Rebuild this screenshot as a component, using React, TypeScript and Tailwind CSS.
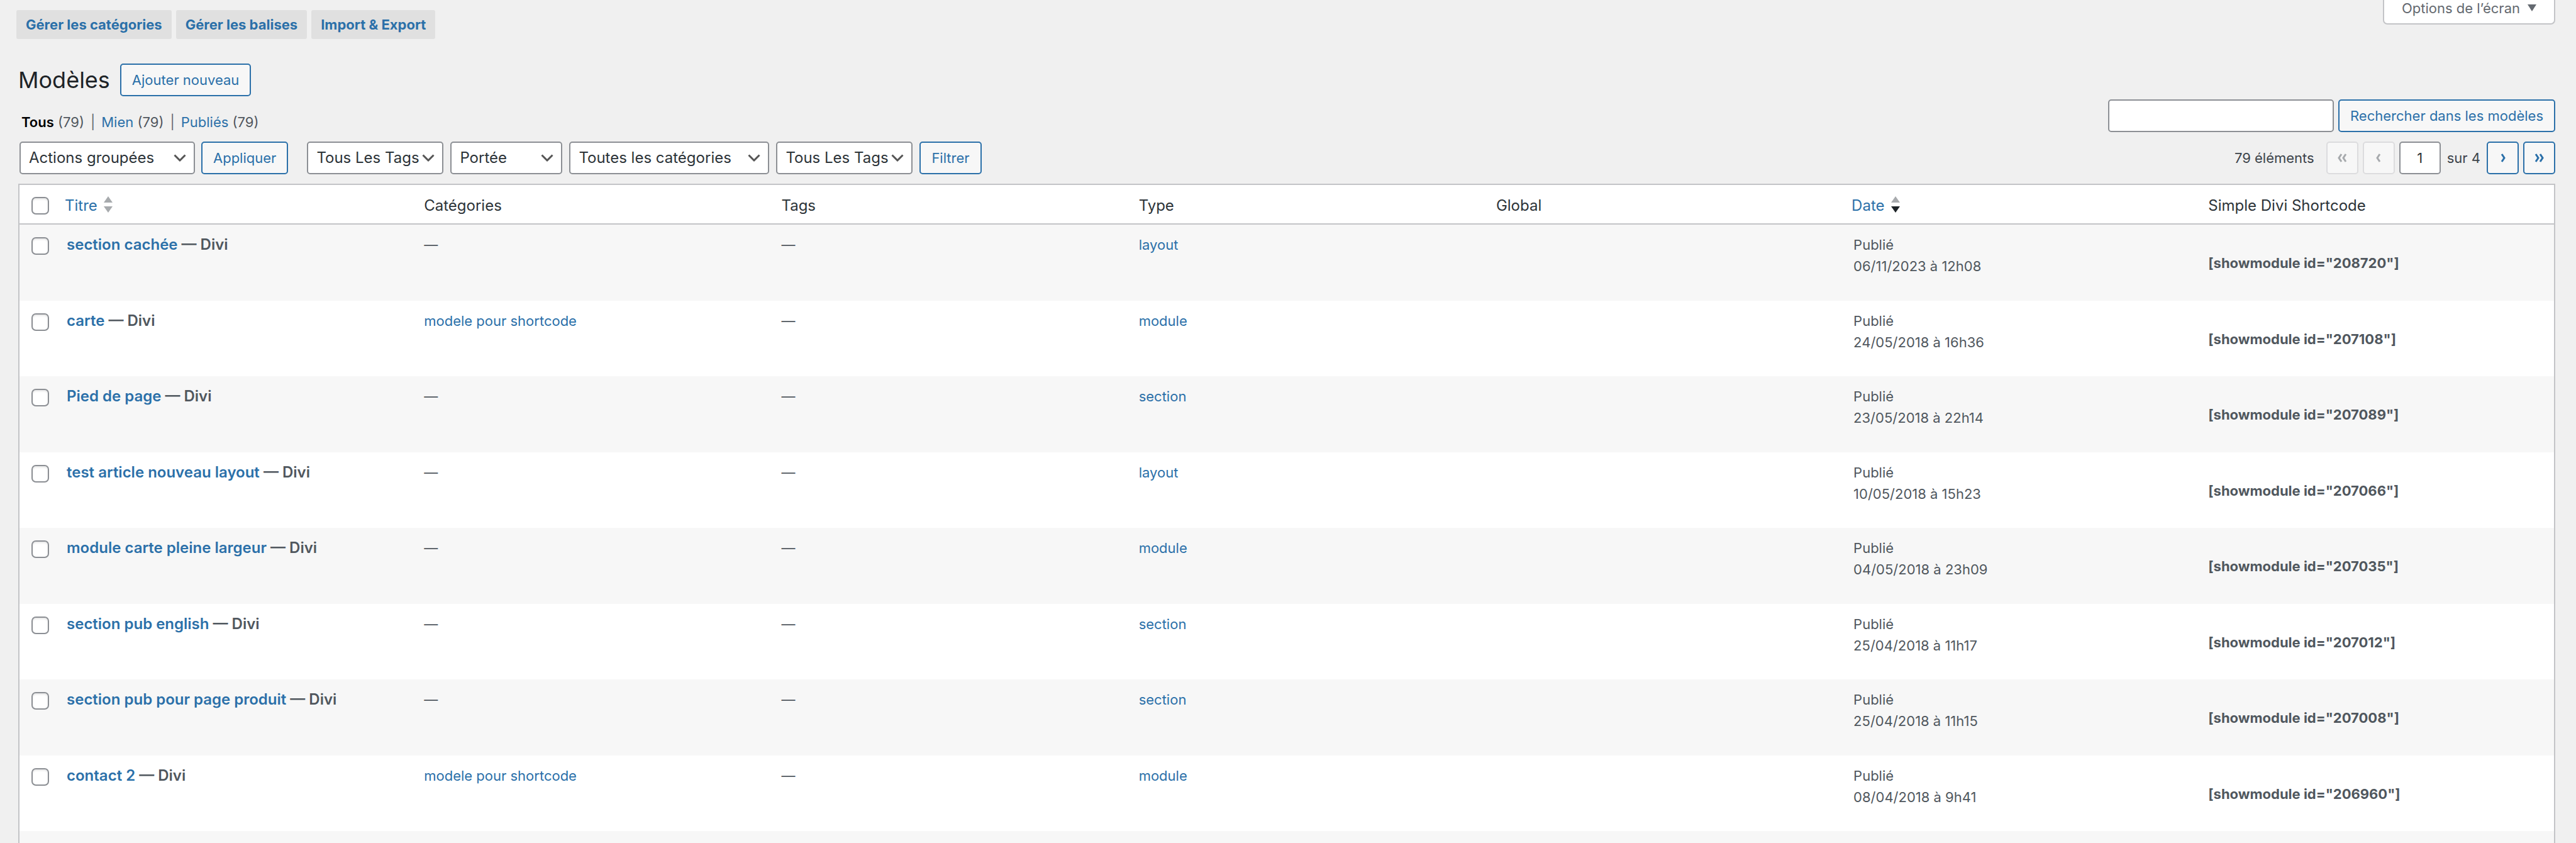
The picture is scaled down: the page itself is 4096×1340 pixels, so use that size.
import { ReactNode } from 'react'
import { clsx } from 'clsx'

const topLinks = ['Gérer les catégories', 'Gérer les balises', 'Import & Export']

const views = [
  { label: 'Tous', count: 79, current: true },
  { label: 'Mien', count: 79, current: false },
  { label: 'Publiés', count: 79, current: false },
]

const filters = [
  { id: 'filter-tags', label: 'Filtrer par tag', value: 'Tous Les Tags', width: 'w-[217px]' },
  { id: 'filter-scope', label: 'Filtrer par portée', value: 'Portée', width: 'w-[178px]' },
  { id: 'filter-cat', label: 'Filtrer par catégorie', value: 'Toutes les catégories', width: 'w-[318px]' },
  { id: 'filter-pack', label: 'Filtrer par pack', value: 'Tous Les Tags', width: 'w-[217px]' },
]

const templates = [
  { id: 208720, title: 'section cachée', category: '', type: 'layout', date: '06/11/2023 à 12h08' },
  { id: 207108, title: 'carte', category: 'modele pour shortcode', type: 'module', date: '24/05/2018 à 16h36' },
  { id: 207089, title: 'Pied de page', category: '', type: 'section', date: '23/05/2018 à 22h14' },
  { id: 207066, title: 'test article nouveau layout', category: '', type: 'layout', date: '10/05/2018 à 15h23' },
  { id: 207035, title: 'module carte pleine largeur', category: '', type: 'module', date: '04/05/2018 à 23h09' },
  { id: 207012, title: 'section pub english', category: '', type: 'section', date: '25/04/2018 à 11h17' },
  { id: 207008, title: 'section pub pour page produit', category: '', type: 'section', date: '25/04/2018 à 11h15' },
  { id: 206960, title: 'contact 2', category: 'modele pour shortcode', type: 'module', date: '08/04/2018 à 9h41' },
]

function Button({ children }: { children: ReactNode }) {
  return (
    <button
      type="button"
      className="h-[52px] rounded-[5px] border-2 border-[#2b70a9] bg-[#f7f7f7] px-[17px] whitespace-nowrap text-[#2b70a9]"
    >
      {children}
    </button>
  )
}

function Select({ id, label, value, width }: { id: string; label: string; value: string; width: string }) {
  return (
    <div className={clsx('relative', width)}>
      <select
        id={id}
        aria-label={label}
        className="h-[52px] w-full appearance-none rounded-[5px] border-2 border-[#8c8f94] bg-white pl-[13px] text-[24px] leading-[32px] text-[#2c3338]"
      >
        <option>{value}</option>
      </select>
      <svg viewBox="0 0 20 13" className="pointer-events-none absolute top-5 right-[14px] h-[13px] w-5" fill="none" stroke="#555" strokeWidth="3">
        <path d="M1.5 1.5 10 10 18.5 1.5" />
      </svg>
    </div>
  )
}

function PageButton({ label, double, back, disabled }: { label: string; double?: boolean; back?: boolean; disabled?: boolean }) {
  return (
    <button
      type="button"
      aria-label={label}
      disabled={disabled}
      className={clsx(
        'flex h-[52px] w-[51px] items-center justify-center rounded-[5px] border-2 bg-[#f7f7f7]',
        disabled ? 'border-[#dcdcde] text-[#a7aaad]' : 'border-[#2b70a9] text-[#2b70a9]'
      )}
    >
      <svg viewBox="0 0 16 14" className={clsx('h-[14px] w-4', back && 'rotate-180')} fill="none" stroke="currentColor" strokeWidth="3">
        {double ? <path d="M2 1 6 7 2 13M9 1 13 7 9 13" /> : <path d="M6 1 10 7 6 13" />}
      </svg>
    </button>
  )
}

function Checkbox({ label }: { label: string }) {
  return (
    <input
      type="checkbox"
      aria-label={label}
      className="block size-7 appearance-none rounded-[7px] border-2 border-[#8c8f94] bg-white shadow-[inset_0_2px_3px_rgba(0,0,0,0.1)]"
    />
  )
}

function SortLink({ label, desc }: { label: string; desc?: boolean }) {
  return (
    <a href="#" className="flex items-center gap-[10px] pl-[14px] text-[#2b70a9]">
      {label}
      <svg viewBox="0 0 14 26" className="mb-1 h-[26px] w-[14px]">
        <path d="M0 10 7 0 14 10Z" fill="#a7aaad" />
        <path d="M0 16h14L7 26Z" fill={desc ? '#1d2327' : '#a7aaad'} />
      </svg>
    </a>
  )
}

export default function App() {
  return (
    <div className="flex min-h-screen flex-col bg-[#f0f0f0] pr-[33px] pl-[29px] font-['Inter',sans-serif] text-[22px] text-[#3c434a]">
      <header className="flex items-start justify-between">
        <nav className="-ml-[3px] flex gap-[7px] pt-4">
          {topLinks.map((link) => (
            <a key={link} href="#" className="flex h-[46px] items-center rounded-[3px] bg-[#e0e0e0] px-[15px] font-bold text-[#2b70a9]">
              {link}
            </a>
          ))}
        </nav>
        <button type="button" className="flex h-[39px] items-start gap-3 rounded-b-[7px] border-2 border-t-0 border-[#c3c4c7] bg-white px-7 text-[#646970]">
          <span className="leading-[26px]">Options de l’écran</span>
          <svg viewBox="0 0 14 11" className="mt-[7px] h-[11px] w-[14px]" fill="currentColor">
            <path d="M0 0h14L7 11Z" />
          </svg>
        </button>
      </header>

      <div className="mt-[39px] flex items-center gap-4">
        <h1 className="text-[36px] leading-[52px] text-[#1d2327]">Modèles</h1>
        <Button>Ajouter nouveau</Button>
      </div>

      <div className="mt-[5px] flex items-end justify-between">
        <ul className="flex pb-[1px] pl-[5px] leading-[30px]">
          {views.map((view, i) => (
            <li key={view.label} className="flex whitespace-pre">
              {i > 0 && <span className="px-[10px] text-[#646970]">|</span>}
              <a href="#" className={view.current ? 'font-semibold text-black' : 'text-[#2b70a9]'}>{view.label}</a>
              <span className="text-[#50575e]"> ({view.count})</span>
            </li>
          ))}
        </ul>
        <form className="flex gap-[7px]">
          <input type="search" aria-label="Rechercher" className="h-[52px] w-[359px] rounded-[5px] border-2 border-[#8c8f94] bg-white px-3" />
          <Button>Rechercher dans les modèles</Button>
        </form>
      </div>

      <div className="mt-[15px] flex items-center justify-between">
        <div className="flex pl-[2px]">
          <div className="flex gap-[10px]">
            <Select id="bulk-action" label="Actions groupées" value="Actions groupées" width="w-[279px]" />
            <Button>Appliquer</Button>
          </div>
          <div className="ml-[30px] flex gap-[11px]">
            {filters.map((filter) => (
              <Select key={filter.id} {...filter} />
            ))}
            <Button>Filtrer</Button>
          </div>
        </div>
        <div className="flex items-center gap-[7px]">
          <span className="mr-3">79 éléments</span>
          <PageButton label="Première page" double back disabled />
          <PageButton label="Page précédente" back disabled />
          <input aria-label="Page actuelle" defaultValue="1" className="h-[52px] w-[66px] rounded-[5px] border-2 border-[#8c8f94] bg-white text-center text-[#2c3338]" />
          <span className="mx-[3px]">sur 4</span>
          <PageButton label="Page suivante" />
          <PageButton label="Dernière page" double />
        </div>
      </div>

      <table className="mt-[15px] w-full table-fixed border-separate border-spacing-0 border-2 border-b-0 border-[#c3c4c7] bg-white text-left">
        <thead className="text-[24px] leading-[34px] text-[#2c3338] [&_th]:border-b-2 [&_th]:border-[#c3c4c7] [&_th]:pt-1 [&_th]:font-normal">
          <tr className="h-[63px]">
            <th className="w-[58px] pl-[19px]"><Checkbox label="Tout sélectionner" /></th>
            <th className="w-[14.1%]"><SortLink label="Titre" /></th>
            <th className="w-[14.1%] px-[17px]">Catégories</th>
            <th className="w-[14.1%] px-[17px]">Tags</th>
            <th className="w-[14.1%] px-[17px]">Type</th>
            <th className="w-[14.1%] px-[17px]">Global</th>
            <th className="w-[14%]"><SortLink label="Date" desc /></th>
            <th className="px-[17px]">Simple Divi Shortcode</th>
          </tr>
        </thead>
        <tbody className="text-[#50575e] [&_td]:px-[17px] [&_td]:pt-[15px] [&_td]:align-top">
          {templates.map((item) => (
            <tr key={item.id} className="h-[120px] leading-[34px] odd:h-[121px] odd:bg-[#f7f7f7]">
              <th className="pt-5 pl-[19px] align-top"><Checkbox label={`Sélectionner ${item.title}`} /></th>
              <td className="text-[24px] font-semibold">
                <a href="#" className="text-[#2b70a9]">{item.title}</a> — Divi
              </td>
              <td>{item.category ? <a href="#" className="text-[#2b70a9]">{item.category}</a> : '—'}</td>
              <td>—</td>
              <td><a href="#" className="text-[#2b70a9]">{item.type}</a></td>
              <td></td>
              <td>Publié<br />{item.date}</td>
              <td><p className="mt-[29px] font-bold">[showmodule id="{item.id}"]</p></td>
            </tr>
          ))}
        </tbody>
      </table>
      <div className="flex-1 border-x-2 border-[#c3c4c7] bg-[#f7f7f7]" />
    </div>
  )
}
